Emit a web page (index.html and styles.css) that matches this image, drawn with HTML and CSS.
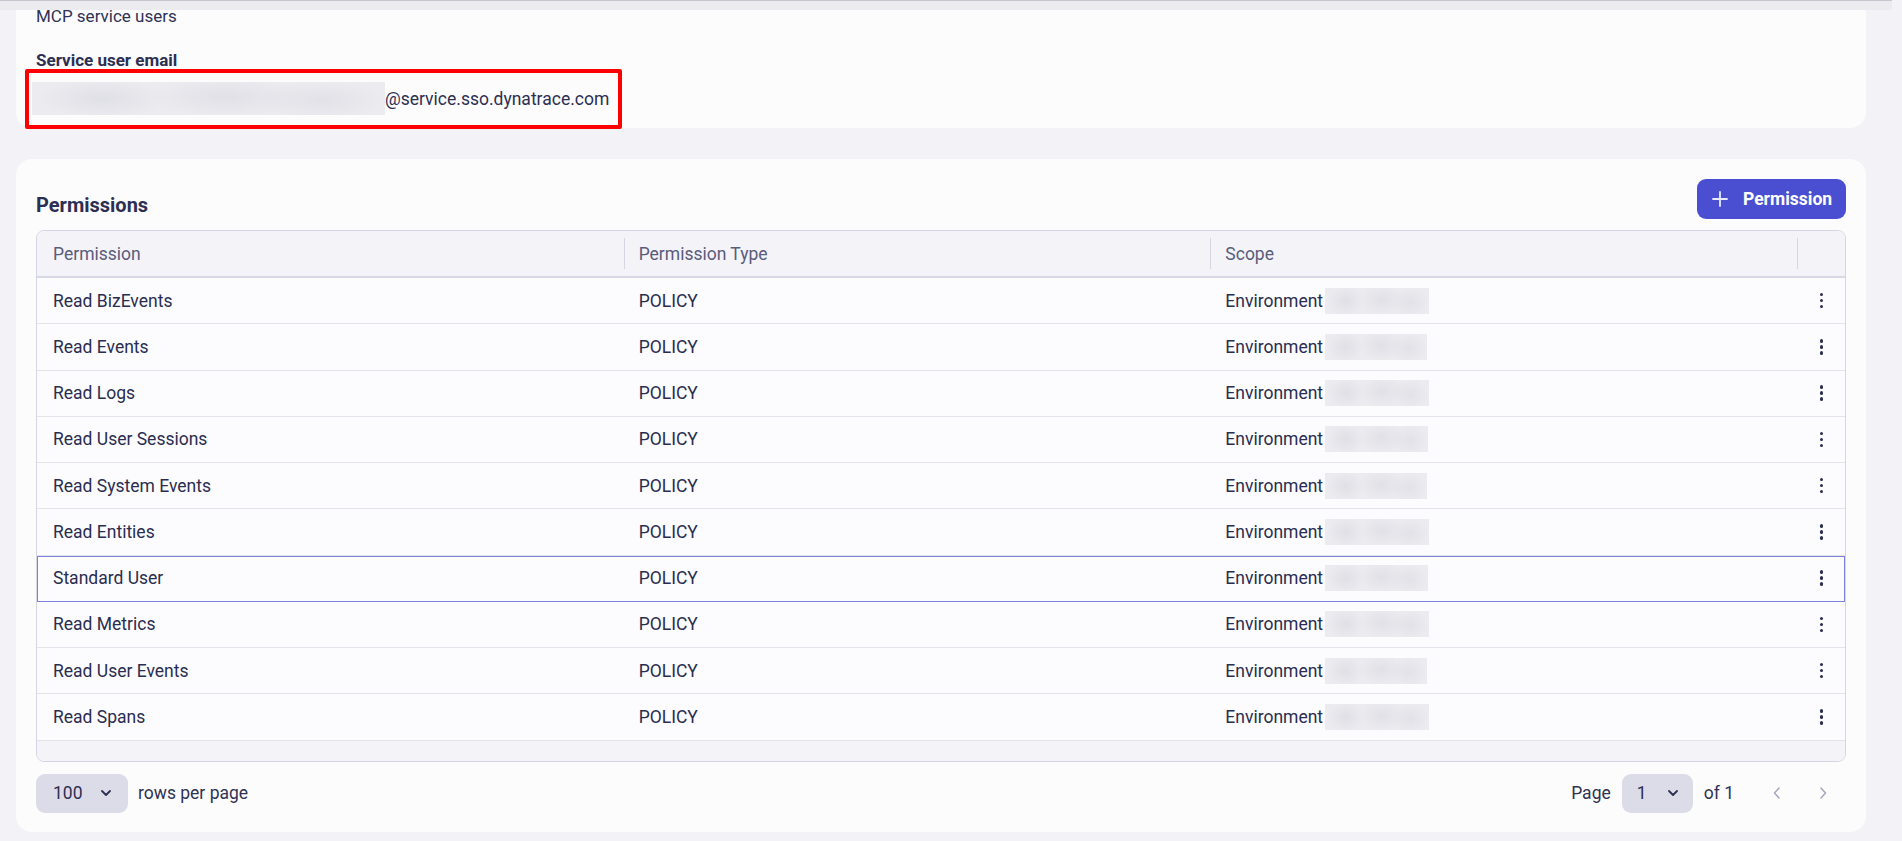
FILE: index.html
```html
<!DOCTYPE html>
<html lang="en">
<head>
<meta charset="utf-8">
<title>MCP service users</title>
<link rel="stylesheet" href="styles.css">
</head>
<body>
<div class="topbar"></div>
<main class="page">
  <section class="card info-card">
    <div class="info-line">MCP service users</div>
    <div class="info-label">Service user email</div>
    <div class="email"><span class="blur email-blur"></span><span class="email-domain">@service.sso.dynatrace.com</span></div>
    <div class="annotation"></div>
  </section>

  <section class="card perms-card">
    <div class="perms-head">
      <h2 class="perms-title">Permissions</h2>
      <button class="btn-primary" type="button">
        <svg class="btn-icon" viewBox="0 0 16 16" width="16" height="16"><path d="M8 1v14M1 8h14" stroke="currentColor" stroke-width="1.8" fill="none" stroke-linecap="round"/></svg>
        <span>Permission</span>
      </button>
    </div>

    <div class="table">
      <div class="row thead">
        <div class="th">Permission</div>
        <div class="th th-sep">Permission Type</div>
        <div class="th th-sep">Scope</div>
        <div class="th th-sep"></div>
      </div>

      <div class="row"><div class="td">Read BizEvents</div><div class="td">POLICY</div><div class="td scope">Environment<span class="blur scope-blur" style="width:104px"></span></div><div class="td kebab-cell"><span class="kebab"><i></i><i></i><i></i></span></div></div>
      <div class="row"><div class="td">Read Events</div><div class="td">POLICY</div><div class="td scope">Environment<span class="blur scope-blur" style="width:102px"></span></div><div class="td kebab-cell"><span class="kebab"><i></i><i></i><i></i></span></div></div>
      <div class="row"><div class="td">Read Logs</div><div class="td">POLICY</div><div class="td scope">Environment<span class="blur scope-blur" style="width:104px"></span></div><div class="td kebab-cell"><span class="kebab"><i></i><i></i><i></i></span></div></div>
      <div class="row"><div class="td">Read User Sessions</div><div class="td">POLICY</div><div class="td scope">Environment<span class="blur scope-blur" style="width:103px"></span></div><div class="td kebab-cell"><span class="kebab"><i></i><i></i><i></i></span></div></div>
      <div class="row"><div class="td">Read System Events</div><div class="td">POLICY</div><div class="td scope">Environment<span class="blur scope-blur" style="width:102px"></span></div><div class="td kebab-cell"><span class="kebab"><i></i><i></i><i></i></span></div></div>
      <div class="row"><div class="td">Read Entities</div><div class="td">POLICY</div><div class="td scope">Environment<span class="blur scope-blur" style="width:104px"></span></div><div class="td kebab-cell"><span class="kebab"><i></i><i></i><i></i></span></div></div>
      <div class="row row-active"><div class="td">Standard User</div><div class="td">POLICY</div><div class="td scope">Environment<span class="blur scope-blur" style="width:103px"></span></div><div class="td kebab-cell"><span class="kebab"><i></i><i></i><i></i></span></div></div>
      <div class="row"><div class="td">Read Metrics</div><div class="td">POLICY</div><div class="td scope">Environment<span class="blur scope-blur" style="width:104px"></span></div><div class="td kebab-cell"><span class="kebab"><i></i><i></i><i></i></span></div></div>
      <div class="row"><div class="td">Read User Events</div><div class="td">POLICY</div><div class="td scope">Environment<span class="blur scope-blur" style="width:102px"></span></div><div class="td kebab-cell"><span class="kebab"><i></i><i></i><i></i></span></div></div>
      <div class="row"><div class="td">Read Spans</div><div class="td">POLICY</div><div class="td scope">Environment<span class="blur scope-blur" style="width:104px"></span></div><div class="td kebab-cell"><span class="kebab"><i></i><i></i><i></i></span></div></div>

      <div class="table-strip"></div>
    </div>

    <div class="pager">
      <div class="pager-left">
        <div class="select select-rows"><span>100</span><svg class="chev" viewBox="0 0 10 6" width="10" height="6"><path d="M1 1l4 4 4-4" stroke="currentColor" stroke-width="1.8" fill="none" stroke-linecap="round" stroke-linejoin="round"/></svg></div>
        <span class="pager-text">rows per page</span>
      </div>
      <div class="pager-right">
        <span class="pager-text">Page</span>
        <div class="select select-page"><span>1</span><svg class="chev" viewBox="0 0 10 6" width="10" height="6"><path d="M1 1l4 4 4-4" stroke="currentColor" stroke-width="1.8" fill="none" stroke-linecap="round" stroke-linejoin="round"/></svg></div>
        <span class="pager-text">of 1</span>
        <div class="nav-buttons">
          <button class="icon-btn" type="button" aria-label="Previous page"><svg viewBox="0 0 8 12" width="8" height="12"><path d="M6 1L1.5 6 6 11" stroke="currentColor" stroke-width="1.5" fill="none" stroke-linecap="round" stroke-linejoin="round"/></svg></button>
          <button class="icon-btn" type="button" aria-label="Next page"><svg viewBox="0 0 8 12" width="8" height="12"><path d="M2 1l4.5 5L2 11" stroke="currentColor" stroke-width="1.5" fill="none" stroke-linecap="round" stroke-linejoin="round"/></svg></button>
        </div>
      </div>
    </div>
  </section>
</main>
</body>
</html>
```

FILE: styles.css
```css
* {
  box-sizing: border-box;
}

html, body {
  margin: 0;
  padding: 0;
}

body {
  background: #f2f2f7;
  font-family: Roboto, "Liberation Sans", Arial, sans-serif;
  color: #2c2f52;
  font-size: 17.5px;
  height: 841px;
  overflow: hidden;
  position: relative;
}

.topbar {
  position: absolute;
  top: 0;
  left: 0;
  right: 10px;
  height: 10px;
  background: #ebebf0;
  border-top: 1px solid #c5c6cf;
  z-index: 5;
}

.page {
  padding: 0 36px 0 16px;
  display: flex;
  flex-direction: column;
  gap: 31px;
}

.card {
  background: #fcfcfd;
  border-radius: 16px;
}

.info-card {
  position: relative;
  border-radius: 0 0 16px 16px;
  padding: 6px 20px 13px 20px;
  height: 128px;
}

.info-line {
  font-size: 17px;
  line-height: 20px;
  color: #2f3254;
}

.info-label {
  margin-top: 24px;
  font-size: 17px;
  line-height: 20px;
  font-weight: 700;
  color: #2c2f52;
}

.email {
  margin-top: 12px;
  height: 33px;
  display: flex;
  align-items: center;
  font-size: 17.5px;
  color: #2c2f52;
}

.blur {
  display: inline-block;
  background:
    radial-gradient(ellipse 18% 60% at 20% 50%, rgba(214, 214, 222, 0.55), rgba(214, 214, 222, 0) 100%),
    radial-gradient(ellipse 22% 60% at 55% 45%, rgba(214, 214, 222, 0.5), rgba(214, 214, 222, 0) 100%),
    radial-gradient(ellipse 18% 60% at 82% 55%, rgba(214, 214, 222, 0.45), rgba(214, 214, 222, 0) 100%),
    #ebebf0;
}

.email-blur {
  width: 353px;
  height: 33px;
  margin-left: -4px;
}

.annotation {
  position: absolute;
  left: 9px;
  top: 69px;
  width: 597px;
  height: 60px;
  border: 4px solid #ff0000;
  border-radius: 2px;
}

.perms-card {
  padding: 20px 20px 19px 20px;
}

.perms-head {
  display: flex;
  justify-content: space-between;
  align-items: flex-end;
  margin-bottom: 11px;
}

.perms-title {
  margin: 0;
  font-size: 20px;
  line-height: 24px;
  font-weight: 700;
  color: #2c2f52;
  padding-bottom: 2px;
}

.btn-primary {
  display: flex;
  align-items: center;
  gap: 15px;
  height: 40px;
  width: 149px;
  padding: 0 15px;
  border: none;
  border-radius: 9px;
  background: #4a4fd1;
  color: #ffffff;
  font-family: inherit;
  font-size: 17.5px;
  font-weight: 700;
}

.btn-icon {
  color: #e8e9ff;
  flex: none;
}

.table {
  border: 1px solid #d5d6e3;
  border-radius: 8px;
  overflow: hidden;
  background: #fcfcfe;
}

.row {
  display: grid;
  grid-template-columns: 1fr 1fr 1fr 48px;
  height: 46.25px;
  border-bottom: 1px solid #e3e3eb;
  align-items: center;
}

.thead {
  height: 47px;
  background: #f3f3f8;
  border-bottom: 2px solid #d8d9e5;
  align-items: stretch;
}

.th {
  display: flex;
  align-items: center;
  padding-left: 16px;
  color: #5a5c7c;
  font-size: 17.5px;
}

.th-sep {
  margin: 7px 0;
  border-left: 1px solid #d4d5e0;
  padding-left: 14px;
}

.td {
  padding-left: 16px;
  font-size: 17.5px;
  color: #2a2d50;
  white-space: nowrap;
}

.row .td:nth-child(2),
.row .td:nth-child(3) {
  padding-left: 15px;
}

.scope {
  display: flex;
  align-items: center;
}

.scope-blur {
  height: 26px;
  margin-left: 2px;
}

.row-active {
  position: relative;
  outline: 1px solid #7e82dc;
  outline-offset: -1px;
  border-bottom-color: #7e82dc;
}

.kebab-cell {
  padding-left: 0;
  display: flex;
  justify-content: center;
}

.kebab {
  display: flex;
  flex-direction: column;
  gap: 2.5px;
  margin-left: 1px;
}

.kebab i {
  display: block;
  width: 3.5px;
  height: 3.5px;
  border-radius: 50%;
  background: #2c2f52;
}

.table-strip {
  height: 20px;
  background: #f3f3f8;
}

.pager {
  margin-top: 12px;
  display: flex;
  justify-content: space-between;
  align-items: center;
}

.pager-left,
.pager-right {
  display: flex;
  align-items: center;
}

.pager-left {
  gap: 10px;
}

.pager-right {
  gap: 11px;
  padding-right: 3px;
}

.pager-text {
  font-size: 17.5px;
  color: #2f3254;
}

.select {
  height: 39px;
  background: #dcdce8;
  border-radius: 9px;
  display: flex;
  align-items: center;
  justify-content: space-between;
  color: #2c2f52;
  font-size: 17.5px;
}

.select-rows {
  width: 92px;
  padding: 0 17px 0 17px;
}

.select-page {
  width: 71px;
  padding: 0 15px 0 15px;
}

.chev {
  color: #2c2f52;
}

.nav-buttons {
  display: flex;
  gap: 6px;
  margin-left: 12px;
}

.icon-btn {
  width: 40px;
  height: 36px;
  border: none;
  background: transparent;
  color: #a4a6bd;
  display: flex;
  align-items: center;
  justify-content: center;
  padding: 0;
}
```
